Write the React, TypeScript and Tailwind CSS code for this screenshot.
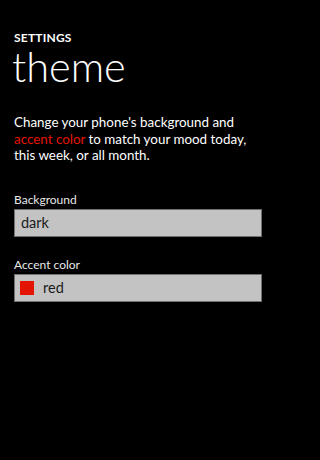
import React from "react";

export default function App() {
  return (
    <div className="w-full min-h-screen bg-black text-white overflow-hidden" style={{ fontFamily: 'Lato, "Open Sans", sans-serif' }}>
      <div className="w-[276px] pl-[14px] pr-[14px]">
        <div className="pt-[31px] text-[12px] leading-[14px] font-bold tracking-[0.2px]">SETTINGS</div>
        <div className="mt-[1px] ml-[-2px] text-[41.5px] leading-[41px] font-light">theme</div>
        <p className="mt-[27px] text-[13.4px] leading-[16.7px] text-white">
          Change your phone's background and <span className="text-[#e51400]">accent color</span> to match your mood today, this week, or all month.
        </p>
        <div className="mt-[28px] text-[12px] leading-[16px] text-[#e8e8e8]">Background</div>
        <div className="mt-[1px] w-[248px] h-[28px] bg-[#c3c3c3] border border-[#707070] flex items-center pl-[6px] text-[14.5px] text-[#1a1a1a]">
          dark
        </div>
        <div className="mt-[20px] text-[12px] leading-[16px] text-[#e8e8e8]">Accent color</div>
        <div className="mt-[1px] w-[248px] h-[28px] bg-[#c3c3c3] border border-[#707070] flex items-center pl-[5px] text-[14.5px] text-[#1a1a1a]">
          <span className="w-[14px] h-[14px] bg-[#e51400] mr-[9px]" />
          red
        </div>
      </div>
    </div>
  );
}
